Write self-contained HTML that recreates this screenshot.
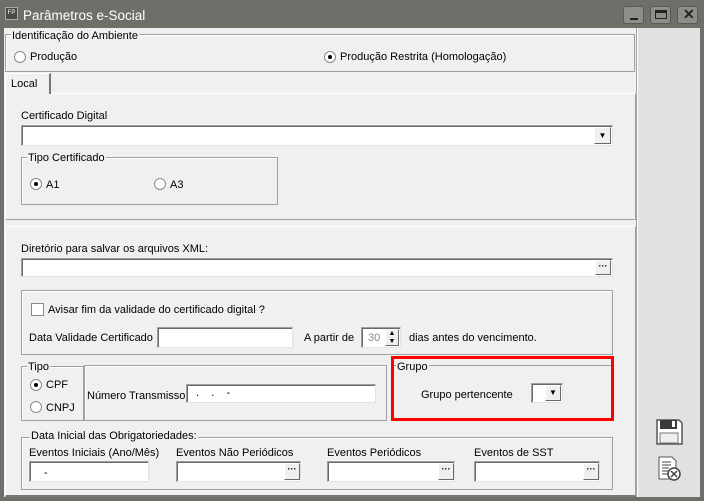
<!DOCTYPE html><html><head><meta charset="utf-8"><style>
*{box-sizing:border-box;margin:0;padding:0}
body{width:704px;height:501px;position:relative;overflow:hidden;background:#6f6f6a;font-family:"Liberation Sans",sans-serif;font-size:11px;color:#000}
div,span{position:absolute}
.t{white-space:nowrap;line-height:13px;margin-top:1px}
.grp{border:1px solid #a0a0a0;box-shadow:inset 1px 1px 0 #fff}
.lg{background:#f0f0f0;padding:0 1px;white-space:nowrap;line-height:13px;margin-top:1px}
.in{background:#fff;border:1px solid #a0a0a0;border-right-color:#e3e3e3;border-bottom-color:#e3e3e3;box-shadow:inset 1px 1px 0 #696969}
.btn{background:#f0f0f0;border:1px solid #fff;border-right-color:#696969;border-bottom-color:#696969;font-size:9px;font-weight:bold;text-align:center;line-height:10px}
.rd{width:12px;height:12px;border-radius:50%;background:#fff;border:1px solid #8a8a8a;margin-top:1px}
.rd.on::after{content:"";position:absolute;left:3px;top:3px;width:4px;height:4px;border-radius:50%;background:#000}
.wb{width:21px;height:18px;border:1px solid #5a5a56;border-radius:3px;background:#8e8e89}
</style></head><body>
<div style="left:5px;top:7px;width:13px;height:13px;background:#4a4a47;border:1px solid #aaa;color:#fff;font-size:6px;line-height:11px;text-align:center">FP</div>
<div class="t" style="left:23px;top:7px;color:#fff;font-size:13.5px;line-height:16px">Parâmetros e-Social</div>
<div class="wb" style="left:623px;top:6px"><span style="left:6px;top:11px;width:8px;height:2px;background:#222"></span></div>
<div class="wb" style="left:650px;top:6px"><span style="left:4px;top:3px;width:12px;height:9px;border:1px solid #222;border-top-width:3px"></span></div>
<div class="wb" style="left:677px;top:6px"><span class="t" style="left:5px;top:0px;font-size:14px;font-weight:bold;color:#222">✕</span></div>
<div style="left:4px;top:28px;width:696px;height:469px;background:#f0f0f0"></div>
<div style="left:637px;top:28px;width:63px;height:469px;background:#e1e1e1;border-left:1px solid #fff"></div>
<div style="left:636px;top:28px;width:1px;height:469px;background:#a0a0a0"></div>

<div class="grp" style="left:5px;top:34px;width:630px;height:38px"></div>
<div class="lg" style="left:11px;top:29px">Identificação do Ambiente</div>
<div class="rd" style="left:14px;top:50px"></div><div class="t" style="left:30px;top:50px">Produção</div>
<div class="rd on" style="left:324px;top:50px"></div><div class="t" style="left:340px;top:50px">Produção Restrita (Homologação)</div>

<div style="left:5px;top:93px;width:631px;height:127px;border:1px solid #fff;border-right-color:#a0a0a0;border-bottom-color:#a0a0a0"></div>
<div style="left:5px;top:73px;width:46px;height:21px;background:#f0f0f0;border:1px solid #fff;border-bottom:none;border-right:2px solid #777"></div>
<div class="t" style="left:11px;top:77px">Local</div>
<div class="t" style="left:21px;top:109px">Certificado Digital</div>
<div class="in" style="left:21px;top:125px;width:592px;height:21px"></div>
<div class="btn" style="left:594px;top:127px;width:17px;height:17px;font-size:8px;line-height:15px">▼</div>
<div class="grp" style="left:21px;top:157px;width:257px;height:48px"></div>
<div class="lg" style="left:27px;top:151px">Tipo Certificado</div>
<div class="rd on" style="left:30px;top:177px"></div><div class="t" style="left:46px;top:178px">A1</div>
<div class="rd" style="left:154px;top:177px"></div><div class="t" style="left:170px;top:178px">A3</div>

<div style="left:5px;top:226px;width:631px;height:271px;border:1px solid #fff;border-right-color:#a0a0a0;border-bottom:2px solid #777"></div>
<div class="t" style="left:21px;top:242px">Diretório para salvar os arquivos XML:</div>
<div class="in" style="left:21px;top:258px;width:592px;height:19px"></div>
<div class="btn" style="left:595px;top:260px;width:16px;height:15px">···</div>

<div class="grp" style="left:21px;top:290px;width:592px;height:65px"></div>
<div style="left:31px;top:303px;width:13px;height:13px;background:#fff;border:1px solid #8a8a8a"></div>
<div class="t" style="left:48px;top:303px">Avisar fim da validade do certificado digital ?</div>
<div class="t" style="left:29px;top:331px">Data Validade Certificado</div>
<div class="in" style="left:157px;top:327px;width:136px;height:21px"></div>
<div class="t" style="left:304px;top:331px">A partir de</div>
<div class="in" style="left:361px;top:327px;width:40px;height:21px"></div>
<div class="t" style="left:368px;top:331px;color:#888">30</div>
<div class="btn" style="left:385px;top:329px;width:14px;height:17px;font-size:7px;line-height:8px">▲<br>▼</div>
<div class="t" style="left:409px;top:331px">dias antes do vencimento.</div>

<div class="grp" style="left:21px;top:366px;width:63px;height:55px"></div>
<div class="lg" style="left:27px;top:360px">Tipo</div>
<div class="rd on" style="left:30px;top:378px"></div><div class="t" style="left:46px;top:378px">CPF</div>
<div class="rd" style="left:30px;top:400px"></div><div class="t" style="left:46px;top:401px">CNPJ</div>
<div class="grp" style="left:84px;top:365px;width:303px;height:56px"></div>
<div class="t" style="left:87px;top:389px">Número Transmissor</div>
<div class="in" style="left:186px;top:384px;width:190px;height:19px"></div>
<div class="t" style="left:196px;top:386px">.&nbsp;&nbsp;&nbsp;&nbsp;.&nbsp;&nbsp;&nbsp;&nbsp;-</div>

<div style="left:391px;top:356px;width:223px;height:65px;border:3px solid #f00"></div>
<div style="left:394px;top:365px;width:217px;height:1px;background:#a0a0a0"></div>
<div class="lg" style="left:396px;top:360px">Grupo</div>
<div class="t" style="left:421px;top:388px">Grupo pertencente</div>
<div class="in" style="left:531px;top:383px;width:32px;height:20px"></div>
<div class="btn" style="left:545px;top:385px;width:16px;height:16px;font-size:8px;line-height:14px">▼</div>

<div class="grp" style="left:21px;top:437px;width:592px;height:53px"></div>
<div class="lg" style="left:30px;top:429px">Data Inicial das Obrigatoriedades:</div>
<div class="t" style="left:29px;top:446px">Eventos Iniciais (Ano/Mês)</div>
<div class="t" style="left:176px;top:446px">Eventos Não Periódicos</div>
<div class="t" style="left:327px;top:446px">Eventos Periódicos</div>
<div class="t" style="left:474px;top:446px">Eventos de SST</div>
<div class="in" style="left:29px;top:461px;width:120px;height:21px"></div><div class="t" style="left:44px;top:466px">-</div>
<div class="in" style="left:176px;top:461px;width:125px;height:21px"></div><div class="btn" style="left:284px;top:463px;width:16px;height:17px">···</div>
<div class="in" style="left:327px;top:461px;width:128px;height:21px"></div><div class="btn" style="left:438px;top:463px;width:16px;height:17px">···</div>
<div class="in" style="left:474px;top:461px;width:126px;height:21px"></div><div class="btn" style="left:583px;top:463px;width:16px;height:17px">···</div>

<svg style="position:absolute;left:655px;top:419px" width="28" height="64" viewBox="0 0 28 64">
<path d="M2 1h22l3 3v21H2z" fill="#fff" stroke="#555" stroke-width="1.5"/>
<rect x="5" y="1" width="17" height="9" fill="#3a3a3a"/><rect x="17" y="2" width="3" height="6" fill="#fff"/>
<rect x="5" y="14" width="18" height="10" fill="#eee" stroke="#777"/>
<path d="M4 38h13l4 4v18H4z" fill="#fff" stroke="#555"/>
<path d="M7 43h9M7 46h9M7 49h7M7 52h6M7 55h6" stroke="#444"/>
<circle cx="19" cy="55" r="6" fill="#fff" stroke="#444" stroke-width="1.5"/><path d="M16 52l6 6M22 52l-6 6" stroke="#444" stroke-width="1.5"/>
</svg>
</body></html>
